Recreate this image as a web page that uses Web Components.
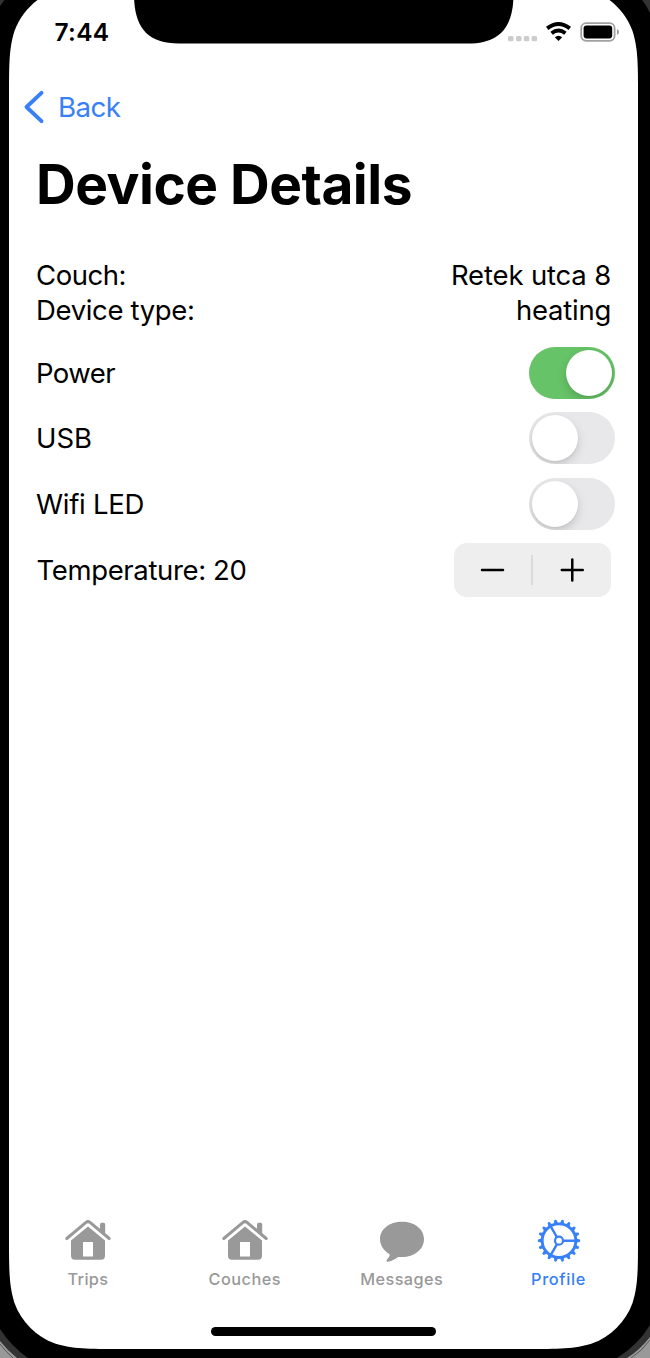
<!DOCTYPE html>
<html lang="en">
<head>
<meta charset="utf-8">
<title>Device Details</title>
<style>
html,body{margin:0;padding:0;width:650px;height:1358px;overflow:hidden;background:#000}
body{font-family:Inter,"Liberation Sans",sans-serif;color:#000}
</style>
</head>
<body>
<phone-frame>
  <status-bar></status-bar>
  <nav-bar></nav-bar>
  <page-title><fit-text width="376">Device Details</fit-text></page-title>
  <info-list>
    <info-row><fit-text width="90">Couch:</fit-text><fit-text slot="value" width="160">Retek utca 8</fit-text></info-row>
    <info-row><fit-text width="158.5">Device type:</fit-text><fit-text slot="value" width="95">heating</fit-text></info-row>
  </info-list>
  <toggle-row on><fit-text width="79">Power</fit-text></toggle-row>
  <toggle-row><fit-text width="56">USB</fit-text></toggle-row>
  <toggle-row><fit-text width="108">Wifi LED</fit-text></toggle-row>
  <stepper-row><fit-text width="210">Temperature: 20</fit-text></stepper-row>
  <tab-bar>
    <tab-item icon="house"><fit-text width="41">Trips</fit-text></tab-item>
    <tab-item icon="house"><fit-text width="72.5">Couches</fit-text></tab-item>
    <tab-item icon="bubble"><fit-text width="83">Messages</fit-text></tab-item>
    <tab-item icon="gear" active><fit-text width="55">Profile</fit-text></tab-item>
  </tab-bar>
</phone-frame>
<script>
function define(name, html, setup) {
  const tpl = document.createElement('template');
  tpl.innerHTML = html;
  customElements.define(name, class extends HTMLElement {
    connectedCallback() {
      if (this.shadowRoot) return;
      this.attachShadow({mode: 'open'}).appendChild(tpl.content.cloneNode(true));
      if (setup) setup(this, this.shadowRoot);
    }
  });
}

// Continuous-curvature rounded rectangle.
function squircle(x, y, w, h, r) {
  const a = 1.52866, b = 1.08849, c = .86841, d = .63149, e = .07491, f = .37282, g = .16906;
  const R = x + w, B = y + h, p = (X, Y) => X.toFixed(2) + ' ' + Y.toFixed(2) + ' ';
  return 'M' + p(x + a*r, y) + 'L' + p(R - a*r, y)
    + 'C' + p(R-b*r,y) + p(R-c*r,y) + p(R-d*r,y+e*r) + 'C' + p(R-f*r,y+g*r) + p(R-g*r,y+f*r) + p(R-e*r,y+d*r) + 'C' + p(R,y+c*r) + p(R,y+b*r) + p(R,y+a*r)
    + 'L' + p(R, B - a*r)
    + 'C' + p(R,B-b*r) + p(R,B-c*r) + p(R-e*r,B-d*r) + 'C' + p(R-g*r,B-f*r) + p(R-f*r,B-g*r) + p(R-d*r,B-e*r) + 'C' + p(R-c*r,B) + p(R-b*r,B) + p(R-a*r,B)
    + 'L' + p(x + a*r, B)
    + 'C' + p(x+b*r,B) + p(x+c*r,B) + p(x+d*r,B-e*r) + 'C' + p(x+f*r,B-g*r) + p(x+g*r,B-f*r) + p(x+e*r,B-d*r) + 'C' + p(x,B-c*r) + p(x,B-b*r) + p(x,B-a*r)
    + 'L' + p(x, y + a*r)
    + 'C' + p(x,y+b*r) + p(x,y+c*r) + p(x+e*r,y+d*r) + 'C' + p(x+g*r,y+f*r) + p(x+f*r,y+g*r) + p(x+d*r,y+e*r) + 'C' + p(x+c*r,y) + p(x+b*r,y) + p(x+a*r,y) + 'Z';
}

define('phone-frame', `
<style>
:host{display:flex;flex-direction:column;position:relative;isolation:isolate;width:650px;height:1358px;overflow:hidden}
.body{position:absolute;inset:0;z-index:-1}
.home{width:225px;height:9px;border-radius:5px;background:#000;margin:0 auto 22.5px 211px;flex:none}
</style>
<svg class="body" width="650" height="1358">
  <rect width="650" height="1358" fill="#000"/>
  <path d="M0 0H4.5L0 6ZM642 0H650V13Q647 6 642 0Z" fill="#333"/>
  <path d="M0 1329Q12 1347 28 1358H0ZM650 1325Q638 1345 617 1358H650Z" fill="#333"/>
  <path d="M0 1341Q7 1350 17 1358H0ZM650 1337Q640 1350 627 1358H650Z" fill="#999"/>
  <path d="M0 1344Q6 1352 13 1358M650 1340Q642 1351 631 1358" fill="none" stroke="#555"/>
  <path class="screen" fill="#fff"/>
  <path d="M134 -6C134 27 147 43.5 179 43.5H468C500 43.5 513.5 27 513.5 -6Z" fill="#000"/>
</svg>
<slot></slot>
<div class="home"></div>`, (el, root) => root.querySelector('.screen').setAttribute('d', squircle(9, -15, 629, 1364, 73)));

define('status-bar', `
<style>
:host{display:flex;height:64px;align-items:center;justify-content:space-between;padding:0 30px 0 54.5px;flex:none}
.time{font-size:24.5px;font-weight:600;line-height:30px}
svg{display:block}
</style>
<fit-text class="time" width="55">7:44</fit-text>
<svg width="114" height="24" viewBox="506 20 114 24">
  <g fill="#ccc"><rect x="508" y="36" width="5.5" height="5.3" rx="1.5"/><rect x="516" y="36" width="5.5" height="5.3" rx="1.5"/><rect x="523.8" y="36" width="5.5" height="5.3" rx="1.5"/><rect x="531.6" y="36" width="5.5" height="5.3" rx="1.5"/></g>
  <g fill="none" stroke="#000" stroke-width="3.9"><path d="M547.2 28.4Q558.5 19.6 569.8 28.4"/><path d="M551.6 33.3Q558.5 27.9 565.4 33.3"/></g>
  <path d="M554.8 37.3Q558.5 34.3 562.2 37.3L558.5 41Z"/>
  <rect x="581.2" y="23.2" width="33.4" height="17.6" rx="5" fill="#fff" stroke="#a0a0a0" stroke-width="1.8"/>
  <rect x="583.6" y="25.6" width="28.6" height="12.8" rx="2.8"/>
  <path d="M617 29Q619 30 619 32T617 35Z" fill="#999"/>
</svg>`);

define('nav-bar', `
<style>
:host{display:flex;height:86px;align-items:center;padding-left:23px;color:#3880f7;font-size:27.7px;line-height:34px;flex:none}
svg{margin-right:13px}
</style>
<svg width="22" height="34" viewBox="23 90 22 34"><path d="M41.5 92.8L26.5 107L41.5 121.2" fill="none" stroke="currentColor" stroke-width="3.9" stroke-linecap="round" stroke-linejoin="round"/></svg>
<fit-text width="62.5">Back</fit-text>`);

define('page-title', `<style>:host{display:block;height:68px;line-height:69px;font-size:55px;font-weight:700;padding-left:36px;flex:none}</style><slot></slot>`);

define('info-list', `<style>:host{display:block;padding:40px 39px 13px 36px;flex:none}</style><slot></slot>`);

define('info-row', `<style>:host{display:flex;justify-content:space-between;height:34.4px;align-items:center;font-size:27.5px;line-height:34px}</style><slot></slot><slot name="value"></slot>`);

define('toggle-row', `
<style>
:host{display:flex;align-items:center;justify-content:space-between;height:65.5px;padding:0 35.5px 0 36px;font-size:27.5px;line-height:34px;flex:none}
.track{box-sizing:border-box;display:flex;width:85.5px;height:52px;border-radius:26px;background:#e8e8ea;padding:3px;overflow:hidden}
.knob{width:46px;height:46px;border-radius:50%;background:#fff;box-shadow:0 4px 10px rgba(0,0,0,.15),0 1px 2px rgba(0,0,0,.06)}
:host([on]) .track{background:#66c367;justify-content:flex-end}
</style>
<slot></slot><div class="track"><div class="knob"></div></div>`);

define('stepper-row', `
<style>
:host{display:flex;align-items:center;justify-content:space-between;height:67px;padding:0 39px 0 36.5px;font-size:27.5px;line-height:34px;flex:none;margin-bottom:auto}
.step{display:flex;width:157.5px;height:53.5px;border-radius:13px;background:#eee;align-items:center}
svg{flex:1}
.line{width:1.6px;height:30px;background:#dadada}
path{stroke:#000;stroke-width:2.5;stroke-linecap:round}
</style>
<slot></slot>
<div class="step">
  <svg height="26" viewBox="-38.5 -13 78 26"><path d="M-10.5 0H10.5"/></svg>
  <div class="line"></div>
  <svg height="26" viewBox="-39.3 -13 78 26"><path d="M-10.5 0H10.5M0 -10.5V10.5"/></svg>
</div>`);

define('tab-bar', `<style>:host{display:flex;padding:0 13px 0 9.5px;height:76px;margin-bottom:34.5px;flex:none}::slotted(tab-item){flex:1 1 0}</style><slot></slot>`);

const gearTeeth = Array.from({length: 18}, (_, i) => `<path d="M17.3 -2.1L20.9 -1.1Q21.6 0 20.9 1.1L17.3 2.1Z" transform="rotate(${i * 20})"/>`).join('');
const icons = {
  house: `<path d="M-21.2 -2.2L-2 -18.3Q0 -19.9 2 -18.3L21.2 -2.2" fill="none" stroke="currentColor" stroke-width="3" stroke-linecap="round" stroke-linejoin="round"/>
    <path d="M12 -16.3Q12 -18 13.5 -18H15.7Q17.2 -18 17.2 -16.3V-6L12 -10.4Z"/>
    <path fill-rule="evenodd" d="M0 -14.3L17 -.2V15Q17 19 13 19H-13Q-17 19 -17 15V-.2ZM-5 1.2V15.8H5V1.2Z"/>`,
  bubble: `<path d="M0 -19C12.5 -19 22 -11.6 22 -1.8C22 8.5 12.5 16.2 0 16.2H-3.8C-7.5 18.6 -11.3 20.8 -14.2 21Q-16.5 20.7 -15 18.7C-13 16.8 -12 15 -12.6 13.2C-18.4 9.8 -22 4.5 -22 -1.8C-22 -11.6 -12.5 -19 0 -19Z"/>`,
  gear: `${gearTeeth}<g fill="none" stroke="currentColor"><circle r="16.8" stroke-width="2.9"/><circle r="4" stroke-width="2.2"/><path d="M4.5 0H16M-2.25 -3.9L-8 -13.86M-2.25 3.9L-8 13.86" stroke-width="2.4"/></g>`
};
define('tab-item', `
<style>
:host{display:flex;flex-direction:column;align-items:center;color:#999;font-size:16.3px;font-weight:500;line-height:20px}
:host([active]){color:#3880f7}
svg{display:block;margin-bottom:5px}
</style>
<svg width="48" height="48" viewBox="-24 -24.7 48 48" fill="currentColor"></svg>
<slot></slot>`, (el, root) => root.querySelector('svg').innerHTML = icons[el.getAttribute('icon')]);

// Text run whose tracking is adjusted to a given advance width.
// Defined last, so that the rows around it already set its font size.
define('fit-text', `<style>:host{display:inline-block;white-space:nowrap}</style><span><slot></slot></span>`, (el, root) => {
  const s = root.querySelector('span'), n = el.textContent.length;
  const extra = (parseFloat(el.getAttribute('width')) - s.getBoundingClientRect().width) / n;
  s.style.letterSpacing = extra.toFixed(3) + 'px';
});
</script>
</body>
</html>
